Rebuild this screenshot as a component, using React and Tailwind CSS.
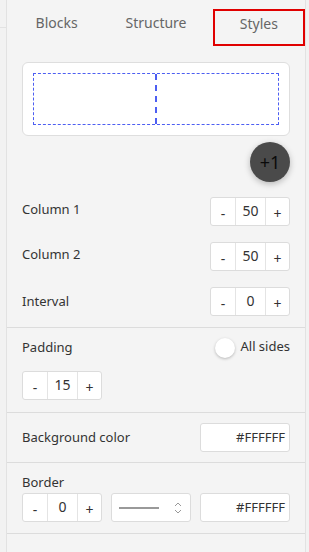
import React from 'react';

function Stepper({ value }) {
    return (
        <div className="flex h-[29px] w-[80px] rounded-[3px] border border-[#dcdcdc] bg-white text-[14px] text-[#333]">
            <button className="w-[24px] flex items-center justify-center pt-[3px]">-</button>
            <div className="w-[31px] flex items-start justify-center border-x border-[#e4e4e4] pt-[2px]">{value}</div>
            <button className="flex-1 flex items-center justify-center pt-[3px]">+</button>
        </div>
    );
}

function ColorInput() {
    return (
        <div className="flex h-[29px] w-[90px] items-center justify-end rounded-[3px] border border-[#dcdcdc] bg-white pr-[4px] text-[13px] text-[#333]">
            #FFFFFF
        </div>
    );
}

export default function App() {
    return (
        <div className="flex h-[552px] w-[309px] bg-[#f4f4f4] text-[#333]" style={{ fontFamily: '"Noto Sans", "Open Sans", sans-serif' }}>
            {/* left edge */}
            <div className="w-[7px] border-r border-[#e2e2e2] bg-[#f2f2f2]">
                <div className="h-[28px] border-b border-[#e2e2e2]"></div>
            </div>

            <div className="flex flex-1 flex-col border-r border-[#e2e2e2]">
                {/* tabs */}
                <div className="grid h-[48px] grid-cols-3 text-[14px] text-[#666]">
                    <div className="flex items-center justify-center pb-[4px]">Blocks</div>
                    <div className="flex items-center justify-center pb-[4px]">Structure</div>
                    <div className="pl-[7px] pt-[9px]">
                        <div className="flex h-[37px] items-center justify-center border-2 border-[#e00000] pb-[9px]">Styles</div>
                    </div>
                </div>

                <div className="px-[15px] pt-[14px]">
                    {/* preview */}
                    <div className="h-[74px] rounded-[6px] border border-[#dedede] bg-white p-[10px]">
                        <div className="flex h-[52px] border border-dashed border-[#4d5ef2]">
                            <div className="flex-1 border-r-2 border-dashed border-[#4d5ef2]"></div>
                            <div className="flex-1"></div>
                        </div>
                    </div>

                    <div className="mt-[6px] flex justify-end">
                        <div className="flex h-[40px] w-[40px] items-center justify-center rounded-full bg-[#4a4a4a] text-[18px] text-[#0a0a0a] shadow-[0_2px_6px_rgba(0,0,0,0.25)]">+1</div>
                    </div>

                    {/* columns */}
                    <div className="mt-[15px] flex flex-col gap-[16px] text-[13px]">
                        <div className="flex items-center justify-between">
                            <span className="-mt-[3px]">Column 1</span>
                            <Stepper value="50" />
                        </div>
                        <div className="flex items-center justify-between">
                            <span className="-mt-[3px]">Column 2</span>
                            <Stepper value="50" />
                        </div>
                        <div className="flex items-center justify-between">
                            <span>Interval</span>
                            <Stepper value="0" />
                        </div>
                    </div>
                </div>

                <div className="mt-[11px] border-t border-[#dcdcdc] px-[15px] pt-[10px] pb-[12px] text-[13px]">
                    <div className="flex h-[20px] items-center justify-between">
                        <span>Padding</span>
                        <div className="flex items-center">
                            <div className="h-[20px] w-[20px] rounded-full bg-white shadow-[0_1px_3px_rgba(0,0,0,0.25)]"></div>
                            <span className="ml-[5px] -mt-[3px]">All sides</span>
                        </div>
                    </div>
                    <div className="mt-[13px]">
                        <Stepper value="15" />
                    </div>
                </div>

                <div className="border-t border-[#dcdcdc] px-[15px] py-[10px] text-[13px]">
                    <div className="flex items-center justify-between">
                        <span>Background color</span>
                        <ColorInput />
                    </div>
                </div>

                <div className="border-t border-[#dcdcdc] px-[15px] pt-[10px] pb-[11px] text-[13px]">
                    <div className="leading-[18px]">Border</div>
                    <div className="mt-[2px] flex items-center justify-between">
                        <Stepper value="0" />
                        <div className="flex h-[29px] w-[80px] items-center rounded-[3px] border border-[#dcdcdc] bg-white pl-[7px] pr-[7px]">
                            <div className="h-[2px] w-[40px] bg-[#999]"></div>
                            <svg className="ml-auto" width="10" height="16" viewBox="0 0 10 16" fill="none" stroke="#999" strokeWidth="1">
                                <path d="M2 6l3-3 3 3" />
                                <path d="M2 10l3 3 3-3" />
                            </svg>
                        </div>
                        <ColorInput />
                    </div>
                </div>
                <div className="border-t border-[#dcdcdc]"></div>
            </div>

            <div className="w-[3px] bg-[#f2f2f2]"></div>
        </div>
    );
}
